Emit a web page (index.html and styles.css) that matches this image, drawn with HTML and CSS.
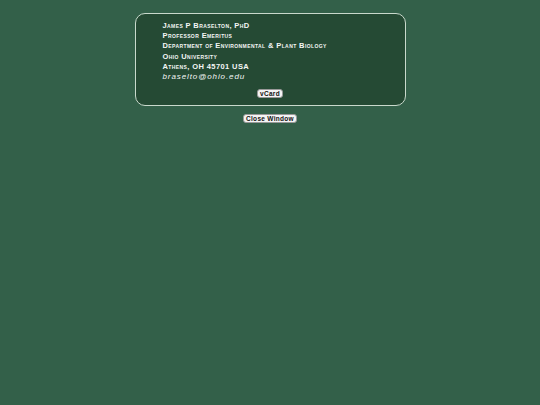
FILE: index.html
```html
<!DOCTYPE html>
<html lang="en">
<head>
    <meta charset="UTF-8">
    <title>James P Braselton</title>
    <link rel="stylesheet" href="styles.css">
</head>
<body>

<!-- contact card -->
<div class="card">
    <div class="card-lines">
        <div class="line">James P Braselton, PhD</div>
        <div class="line">Professor Emeritus</div>
        <div class="line">Department of Environmental &amp; Plant Biology</div>
        <div class="line">Ohio University</div>
        <div class="line">Athens, OH 45701 USA</div>
        <div class="line email">braselto@ohio.edu</div>
    </div>
    <div class="card-btn">
        <a href="#" class="btn">vCard</a>
    </div>
</div>

<div class="close-row">
    <a href="#" class="btn" onclick="window.close(); return false;">Close Window</a>
</div>

</body>
</html>
```

FILE: styles.css
```css
/* page */
body {
    margin: 0;
    padding: 13px 0 0;
    background-color: #336049;
    font-family: "Liberation Sans", Arial, sans-serif;
    color: #ffffff;
}

/* contact card */
.card {
    width: 269px;
    margin: 0 auto;
    background-color: #254a34;
    border: 1px solid #c9d9cc;
    border-radius: 10px;
    padding: 7px 0 7px 0;
}
.card-lines {
    padding-left: 27px;
}
.line {
    font-size: 7.5px;
    font-weight: bold;
    font-variant: small-caps;
    letter-spacing: 0.4px;
    line-height: 10.2px;
    color: #f4f6f4;
}
.email {
    font-size: 8px;
    font-variant: normal;
    font-style: italic;
    font-weight: normal;
    letter-spacing: 0.9px;
}

.card-btn {
    display: flex;
    justify-content: center;
    margin-top: 7px;
}

/* buttons */
.btn {
    display: block;
    background: #f4f4f4;
    color: #111;
    font-size: 6.5px;
    font-weight: bold;
    letter-spacing: 0.3px;
    text-decoration: none;
    padding: 0 2px;
    line-height: 7px;
    border-radius: 3px;
    border: 0.5px solid #999;
}

.close-row {
    display: flex;
    justify-content: center;
    margin-top: 8px;
}
```
